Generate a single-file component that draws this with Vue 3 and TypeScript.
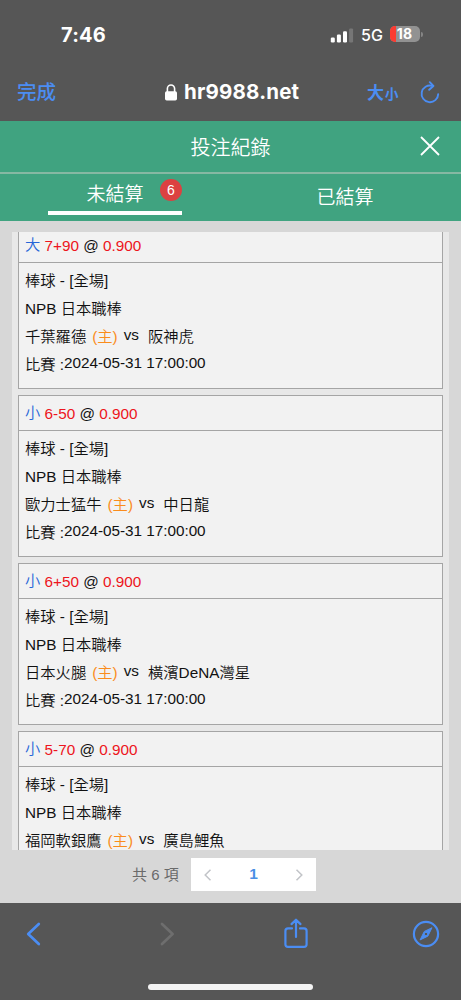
<script setup lang="ts">
interface Bet {
  side: string
  line: string
  odds: string
  home: string
  away: string
  start?: string
}

const bets: Bet[] = [
  { side: '大', line: '7+90', odds: '0.900', home: '千葉羅德', away: '阪神虎', start: '2024-05-31 17:00:00' },
  { side: '小', line: '6-50', odds: '0.900', home: '歐力士猛牛', away: '中日龍', start: '2024-05-31 17:00:00' },
  { side: '小', line: '6+50', odds: '0.900', home: '日本火腿', away: '橫濱DeNA灣星', start: '2024-05-31 17:00:00' },
  { side: '小', line: '5-70', odds: '0.900', home: '福岡軟銀鷹', away: '廣島鯉魚' },
]
</script>

<template>
  <div class="screen">
    <header class="chrome">
      <div class="status">
        <span class="clock">7:46</span>
        <svg class="signal" width="24" height="16" viewBox="0 0 24 16">
          <rect x="0.8" y="10.6" width="4" height="4.8" rx="1.2" fill="#fff" />
          <rect x="6.9" y="7.6" width="4" height="7.8" rx="1.2" fill="#fff" />
          <rect x="13" y="4.2" width="4" height="11.2" rx="1.2" fill="#fff" />
          <rect x="19.1" y="1.4" width="4" height="14" rx="1.2" fill="#767676" />
        </svg>
        <span class="network">5G</span>
        <span class="battery"><i class="level"></i><b>18</b></span>
        <i class="nub"></i>
      </div>
      <div class="address">
        <span class="done">完成</span>
        <div class="host">
          <svg width="12" height="17" viewBox="0 0 12 17">
            <rect x="0" y="7.2" width="12" height="9.3" rx="1.7" fill="#fff" />
            <path d="M2.4 8V4.6a3.6 3.6 0 0 1 7.2 0V8" fill="none" stroke="#fff" stroke-width="1.6" />
          </svg>
          <span>hr9988.net</span>
        </div>
        <span class="size"><b>大</b><b class="small">小</b></span>
        <svg class="reload" width="20" height="23" viewBox="0 0 20 23" fill="none" stroke="#4b8df3" stroke-width="1.9" stroke-linecap="round" stroke-linejoin="round">
          <path d="M12.2 4.9A8.3 8.3 0 1 0 18.2 13.1" />
          <path d="M9.8 1.2l3.6 3.8-4.2 3.8" />
        </svg>
      </div>
    </header>

    <div class="title">
      <span class="caption">投注紀錄</span>
      <svg class="close" width="20" height="20" viewBox="0 0 20 20" stroke="#fff" stroke-width="1.8">
        <path d="M1 1l18 18M19 1L1 19" />
      </svg>
    </div>
    <nav class="tabs">
      <div class="tab active">
        <span class="label">未結算</span>
        <span class="badge">6</span>
      </div>
      <div class="tab"><span class="label">已結算</span></div>
    </nav>

    <main class="content">
      <div class="list">
        <article v-for="bet in bets" :key="bet.home" class="card">
          <div class="head"><span class="side">{{ bet.side }}</span> <em>{{ bet.line }}</em> @ <em>{{ bet.odds }}</em></div>
          <div class="body">
            <p>棒球 - [全場]</p>
            <p>NPB 日本職棒</p>
            <p>{{ bet.home }}<span class="host-mark">(主)</span><span class="vs">vs</span>{{ bet.away }}</p>
            <p v-if="bet.start">比賽 :<span class="time">{{ bet.start }}</span></p>
          </div>
        </article>
      </div>
      <div class="pager">
        <span class="total">共 6 項</span>
        <div class="pages">
          <svg width="8" height="12" viewBox="0 0 8 12"><path d="M6.5 0.8L1.2 6l5.3 5.2" /></svg>
          <b>1</b>
          <svg width="8" height="12" viewBox="0 0 8 12"><path d="M1.5 0.8L6.8 6l-5.3 5.2" /></svg>
        </div>
      </div>
    </main>

    <footer class="toolbar">
      <div class="tools">
        <svg width="16" height="24" viewBox="0 0 16 24" class="blue thick"><path d="M13.8 2L3.2 12l10.6 10" /></svg>
        <svg width="16" height="24" viewBox="0 0 16 24" class="dim thick"><path d="M3 2l10.6 10L3 22" /></svg>
        <svg width="24" height="32" viewBox="0 0 24 32" class="blue">
          <path d="M8 10.4H4A2.6 2.6 0 0 0 1.4 13v13.2a2.6 2.6 0 0 0 2.6 2.6h16a2.6 2.6 0 0 0 2.6-2.6V13a2.6 2.6 0 0 0-2.6-2.6h-4M12 19V2M7.5 6.1L12 1.7l4.5 4.4" />
        </svg>
        <svg width="28" height="28" viewBox="0 0 28 28" class="blue">
          <circle cx="14" cy="14" r="12.1" />
          <path fill="#4b8df3" fill-rule="evenodd" stroke-width="1" d="M19.8 8.1l-4 8.1-7.7 3.7 4-8.1zM14 12.2a1.8 1.8 0 1 0 0 3.6 1.8 1.8 0 0 0 0-3.6z" />
        </svg>
      </div>
      <div class="home-bar"></div>
    </footer>
  </div>
</template>

<style>
body {
  margin: 0;
  overflow: hidden;
}
</style>

<style scoped>
.screen {
  width: 461px;
  height: 1000px;
  overflow: hidden;
  display: flex;
  flex-direction: column;
  background: #d7d7d7;
  font-family: "Liberation Sans", "Noto Sans CJK TC", sans-serif;
  box-sizing: border-box;
}
.screen * {
  box-sizing: border-box;
}
svg {
  display: block;
  flex: none;
}
.chrome {
  height: 121px;
  flex: none;
  background: #565656;
  color: #fff;
}
.status {
  height: 69px;
  display: flex;
  align-items: center;
  padding-left: 61px;
  font-family: Inter, sans-serif;
}
.clock {
  width: 269px;
  font-size: 20px;
  font-weight: 650;
  letter-spacing: 0.2px;
}
.network {
  width: 29px;
  margin-left: 7px;
  font-size: 16px;
  font-weight: 500;
}
.battery {
  position: relative;
  width: 30px;
  height: 16px;
  margin-top: -1px;
  border-radius: 5px;
  background: #929292;
  overflow: hidden;
  text-align: center;
}
.battery b {
  position: relative;
  display: block;
  font-size: 14px;
  line-height: 16px;
  letter-spacing: 0.1px;
  padding-right: 1px;
}
.level {
  position: absolute;
  left: 0;
  top: 0;
  width: 6px;
  height: 16px;
  background: #fb3b32;
}
.nub {
  width: 2px;
  height: 5px;
  margin-left: 1px;
  border-radius: 0 2px 2px 0;
  background: #858585;
}
.address {
  height: 46px;
  display: flex;
  align-items: center;
  padding-left: 17px;
  color: #4b8df3;
}
.done {
  width: 148px;
  padding-bottom: 3px;
  font-size: 19.5px;
  font-weight: 500;
}
.host {
  width: 202px;
  display: flex;
  align-items: center;
  gap: 7px;
  color: #fff;
  font: 650 20.5px/24px Inter, sans-serif;
  letter-spacing: 0.2px;
}
.size {
  width: 53px;
  padding-bottom: 2px;
  font-size: 17px;
  white-space: nowrap;
}
.size b {
  font-weight: 700;
}
.size .small {
  margin-left: 1px;
  font-size: 13.5px;
}
.title {
  position: relative;
  height: 53px;
  flex: none;
  display: flex;
  align-items: center;
  justify-content: center;
  background: #40a380;
  border-bottom: 2px solid #86b8a3;
  color: #fff;
  font-size: 20px;
}
.caption {
  padding-bottom: 1px;
  font-weight: 350;
}
.close {
  position: absolute;
  right: 21px;
  top: 15px;
}
.tabs {
  height: 47px;
  flex: none;
  display: flex;
  background: #40a380;
  color: #fff;
  font-size: 19px;
  font-weight: 350;
}
.tab {
  position: relative;
  width: 230px;
  padding-top: 10px;
  text-align: center;
  line-height: 28px;
}
.tab.active {
  padding-top: 7px;
}
.tab.active::after {
  content: "";
  position: absolute;
  left: 48px;
  top: 37px;
  width: 134px;
  height: 4px;
  background: #fff;
}
.badge {
  position: absolute;
  left: 160px;
  top: 5px;
  width: 22px;
  height: 22px;
  border-radius: 50%;
  background: #dc4141;
  font-size: 14px;
  line-height: 22px;
}
.content {
  height: 682px;
  flex: none;
  padding: 11px 12px 0;
}
.list {
  height: 618px;
  padding: 0 6px;
  overflow: hidden;
  background: #e8e8e8;
  color: #111;
  font-size: 15.3px;
  font-weight: 350;
}
.card {
  height: 162px;
  margin-bottom: 6px;
  border: 1px solid #a5a5a5;
  background: #f2f2f2;
}
.card:first-child {
  margin-top: -5px;
}
.head {
  height: 35px;
  padding-left: 6px;
  line-height: 35px;
  border-bottom: 1px solid #a5a5a5;
}
.head em {
  font-style: normal;
  color: #ed1520;
}
.side {
  position: relative;
  top: -1px;
  color: #2566d8;
}
.body {
  padding: 4px 6px;
}
p {
  margin: 0;
  height: 28px;
  line-height: 27px;
  white-space: nowrap;
}
.host-mark {
  margin-left: 6px;
  color: #fa8c1c;
}
.vs {
  position: relative;
  top: -2px;
  margin: 0 9px 0 6px;
}
.time {
  position: relative;
  top: -2px;
  letter-spacing: -0.03px;
}
.pager {
  display: flex;
  align-items: center;
  height: 33px;
  margin-top: 8px;
  padding-left: 120px;
  color: #6a6a6a;
  font-size: 15px;
}
.total {
  width: 59px;
  padding-bottom: 3px;
}
.pages {
  width: 125px;
  height: 33px;
  padding: 0 13px;
  display: flex;
  align-items: center;
  justify-content: space-between;
  background: #fff;
}
.pages svg {
  fill: none;
  stroke: #c2c4c8;
  stroke-width: 1.5;
}
.pages b {
  padding-bottom: 1px;
  color: #4a90e5;
  font-size: 15.5px;
}
.toolbar {
  height: 97px;
  flex: none;
  padding-top: 15px;
  background: #565656;
}
.tools {
  height: 32px;
  display: grid;
  grid-template-columns: 134px 124.5px 128.5px 28px;
  align-items: center;
  padding-left: 25px;
}
.tools svg {
  fill: none;
  stroke-width: 2.2;
  stroke-linecap: round;
  stroke-linejoin: round;
}
.tools .blue {
  stroke: #4b8df3;
}
.tools .dim {
  stroke: #6e6e6e;
}
.tools .thick {
  stroke-width: 2.7;
}
.home-bar {
  width: 165px;
  height: 6px;
  margin: 34px auto 0;
  border-radius: 3px;
  background: #f3f3f3;
}
</style>
